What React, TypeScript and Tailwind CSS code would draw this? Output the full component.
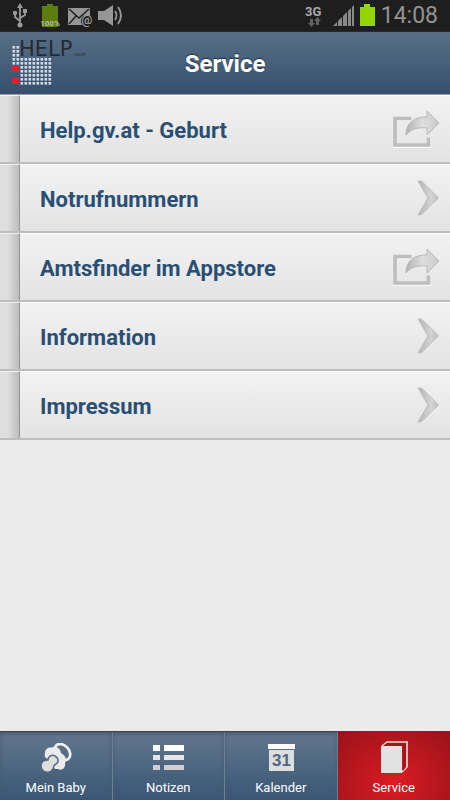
import React from "react";

const ShareIcon = () => (
    <svg width="50" height="38" viewBox="0 0 50 38" aria-hidden="true">
        <defs>
            <linearGradient id="share" x1="0" x2="1">
                <stop offset="0" stopColor="#b3b3b3" />
                <stop offset="0.5" stopColor="#dedede" />
                <stop offset="1" stopColor="#cbcbcb" />
            </linearGradient>
        </defs>
        <path d="M22 9.500H4.500V36.500H39.500V27" fill="none" stroke="#f8f8f8" strokeWidth="3" />
        <path d="M21.500 8.500H5V35H38.500V27.500" fill="none" stroke="#bdbdbd" strokeWidth="3.600" />
        <path d="M16 25C16 13 24 6.500 37 7V1L49 13L37 25V18C28 17 21 19 16 25Z" fill="url(#share)" stroke="#b9b9b9" strokeWidth="1" />
    </svg>
);

const ChevronIcon = () => (
    <svg width="24" height="38" viewBox="0 0 24 38" aria-hidden="true">
        <defs>
            <linearGradient id="chevron" x1="0" x2="1">
                <stop offset="0" stopColor="#b4b4b4" />
                <stop offset="0.65" stopColor="#d4d4d4" />
                <stop offset="1" stopColor="#bcbcbc" />
            </linearGradient>
        </defs>
        <path d="M2 37L13 20L2 4H6L23 20L6 37Z" fill="#f8f8f8" />
        <path d="M2 2H5.500L22.500 19L5.500 36H2L12 19Z" fill="url(#chevron)" stroke="#bcbcbc" strokeWidth="1" strokeLinejoin="round" />
    </svg>
);

const Logo = () => {
    const dots: number[][] = [];
    for (let row = 0; row < 10; row++) {
        for (let col = 0; col < 10; col++) {
            if (col < 2 ? row < 5 : row >= 3) dots.push([col * 4, 5 + row * 4]);
        }
    }
    return (
        <svg width="84" height="58" viewBox="0 -7 84 58" role="img" aria-label="HELP.gv.at">
            {dots.map(([x, y]) => (
                <rect key={`${x}-${y}`} x={x + 0.5} y={y} width="2.600" height="2.600" fill="#d3dce4" />
            ))}
            <rect y="25" width="7" height="6" fill="#ef1c25" />
            <rect y="37" width="7" height="6" fill="#ef1c25" />
            <text x="7" y="15" fontSize="21" fill="#252b32" className="font-['DejaVu_Sans']">HELP</text>
            <text x="61" y="15" fontSize="4" fill="#252b32" className="font-['DejaVu_Sans']">.GV.AT</text>
        </svg>
    );
};

const StatusBar = () => (
    <div className="flex h-[31px] items-center justify-between bg-[#1e1e1e] px-3">
        <svg width="114" height="31" viewBox="0 0 114 31" aria-hidden="true">
            <g fill="none" stroke="#9a9a9a" strokeWidth="1.800">
                <path d="M8 7V25M8 21L3 17V13M8 18L13 15V11" />
            </g>
            <g fill="#9a9a9a">
                <path d="M8 3L11 8H5Z" />
                <circle cx="8" cy="25" r="2.500" />
                <circle cx="3" cy="13" r="2.200" />
                <rect x="11" y="9" width="4" height="4" />
            </g>
            <path d="M30 6H35V4H41V6H46V27H30Z" fill="#5e7d0c" />
            <text x="38" y="26" textAnchor="middle" fontSize="8" fontWeight="700" fill="#b8b8b8" className="font-[Roboto]">100%</text>
            <rect x="56" y="8" width="22" height="17" fill="#969696" />
            <path d="M57 9L67 18L77 9M57 24L64 16" fill="none" stroke="#1e1e1e" strokeWidth="1.400" />
            <circle cx="75" cy="21" r="6" fill="#1e1e1e" />
            <text x="75" y="24" textAnchor="middle" fontSize="12" fontWeight="500" fill="#a5a5a5" className="font-[Roboto]">@</text>
            <path d="M86 11H92L101 5V26L92 20H86Z" fill="#969696" />
            <path d="M103 11Q106 15.500 103 20M106 7Q112 15.500 106 24" fill="none" stroke="#969696" strokeWidth="1.800" />
        </svg>
        <div className="flex items-center gap-1.5">
            <svg width="72" height="31" viewBox="0 0 72 31" aria-hidden="true">
                <text x="2" y="16" fontSize="13" fontWeight="700" fill="#a8a8a8" className="font-[Roboto]">3G</text>
                <path d="M7 19H10V23H12L8.500 27L5 23H7ZM13 25V21H11L14.500 17L18 21H16V25Z" fill="#626262" />
                <path d="M30 26L34 22V26ZM35 21L39 17V26H35ZM40 16L44 12V26H40ZM45 11L48 8V26H45ZM49 7L51 5V26H49Z" fill="#898989" />
                <path d="M57 7H61V4H67V7H72V26H57Z" fill="#94d500" />
            </svg>
            <time className="text-[23px] leading-7 text-[#929292]">14:08</time>
        </div>
    </div>
);

const BabyIcon = () => (
    <svg width="32" height="32" viewBox="0 0 32 32" aria-hidden="true">
        <ellipse cx="22.500" cy="9" rx="9" ry="6.500" transform="rotate(48 22.500 9)" fill="none" stroke="#eef0f2" strokeWidth="2.800" />
        <path d="M5 10C5 6 8 4 12 4.500C16 2.500 20 5 21 10C26 13 27 17 25 20C26 25 22 28 18 26C13 27 10 20 9 16C5 16 4 13 5 10Z" fill="#e9ebed" />
        <path d="M1 23C1 19 4 17 8 17C8 14 11 11 15 13C19 15 19 19 16 21C13 22 14 24 13 26C10 31 2 30 1 23Z" fill="#dedfe0" stroke="#566b83" strokeWidth="1.500" />
    </svg>
);

const ListIcon = () => (
    <svg width="32" height="32" viewBox="0 0 32 32" aria-hidden="true">
        <path d="M1 2H8V8H1ZM12 2H32V8H12Z" fill="#fff" />
        <path d="M1 12H8V17H1ZM12 12H32V17H12Z" fill="#e4e4e4" />
        <path d="M1 22H8V27H1ZM12 22H32V27H12Z" fill="#cfcfcf" />
    </svg>
);

const CalendarIcon = () => (
    <svg width="32" height="32" viewBox="0 0 32 32" aria-hidden="true">
        <path d="M3 1H30V6H3Z" fill="#fff" />
        <path d="M4 7H29V28H4Z" fill="#dedede" />
        <text x="16.500" y="23" textAnchor="middle" fontSize="17" fontWeight="700" fill="#50677f" className="font-['Liberation_Sans']">31</text>
    </svg>
);

const BookIcon = () => (
    <svg width="32" height="36" viewBox="0 0 32 36" aria-hidden="true">
        <path d="M4 5L9 1H29V26L24 31" fill="none" stroke="#f0dede" strokeWidth="1.600" />
        <path d="M5 5L9 2H28V26L25 30V5Z" fill="#a5141a" />
        <path d="M3 5H24V32H3Z" fill="#e2e2e2" />
    </svg>
);

const services = [
    { title: "Help.gv.at - Geburt", external: true },
    { title: "Notrufnummern", external: false },
    { title: "Amtsfinder im Appstore", external: true },
    { title: "Information", external: false },
    { title: "Impressum", external: false },
];

const tabs = [
    { title: "Mein Baby", icon: <BabyIcon />, active: false },
    { title: "Notizen", icon: <ListIcon />, active: false },
    { title: "Kalender", icon: <CalendarIcon />, active: false },
    { title: "Service", icon: <BookIcon />, active: true },
];

const App = () => {
    return (
        <div className="flex min-h-screen flex-col bg-[#ebebeb] font-[Roboto,sans-serif]">
            <StatusBar />
            <header className="grid h-[63px] grid-cols-[1fr_auto_1fr] items-center border-t border-b border-t-[#30261f] border-b-[#344f6d] bg-linear-to-b from-[#596f87] to-[#35506e] px-3">
                <Logo />
                <h1 className="pt-0.5 text-2xl font-bold text-white [text-shadow:0_-1px_1px_#1c2b3c]">Service</h1>
            </header>
            <main className="flex-1">
                <ul className="grid min-h-[346px] auto-rows-fr border-t border-[#9c9c9c]">
                    {services.map((service) => (
                        <li key={service.title} className="grid">
                            <a href="#" className="flex w-full items-stretch border-b-2 border-[#bdbdbd]">
                                <span className="w-5 border-t border-r border-t-[#efefef] border-r-[#969696] bg-linear-to-r from-[#dedede] from-40% to-[#bcbcbc]" />
                                <span className="flex flex-1 items-center justify-between border-t border-t-white bg-linear-to-b from-[#f2f2f2] to-[#e3e3e3] pr-2.5 pl-5 text-[22px] leading-8 font-bold text-[#2a4f74]">
                                    <span className="pt-1">{service.title}</span>
                                    {service.external ? <ShareIcon /> : <ChevronIcon />}
                                </span>
                            </a>
                        </li>
                    ))}
                </ul>
            </main>
            <nav className="grid h-[69px] grid-cols-4 border-t border-[#35424c]">
                {tabs.map((tab) => (
                    <button
                        key={tab.title}
                        type="button"
                        className={
                            tab.active
                                ? "flex flex-col items-center bg-radial-[at_50%_75%] from-[#dc1b23] to-[#99131a] pt-2 text-[13px] leading-5 text-white"
                                : "flex flex-col items-center border-r border-[#6c8095] bg-linear-to-b from-[#63778e] to-[#395674] pt-2 text-[13px] leading-5 text-white shadow-[inset_0_2px_4px_#465a6f]"
                        }
                    >
                        <span className="flex h-[38px] items-center">{tab.icon}</span>
                        {tab.title}
                    </button>
                ))}
            </nav>
        </div>
    );
};

export default App;
